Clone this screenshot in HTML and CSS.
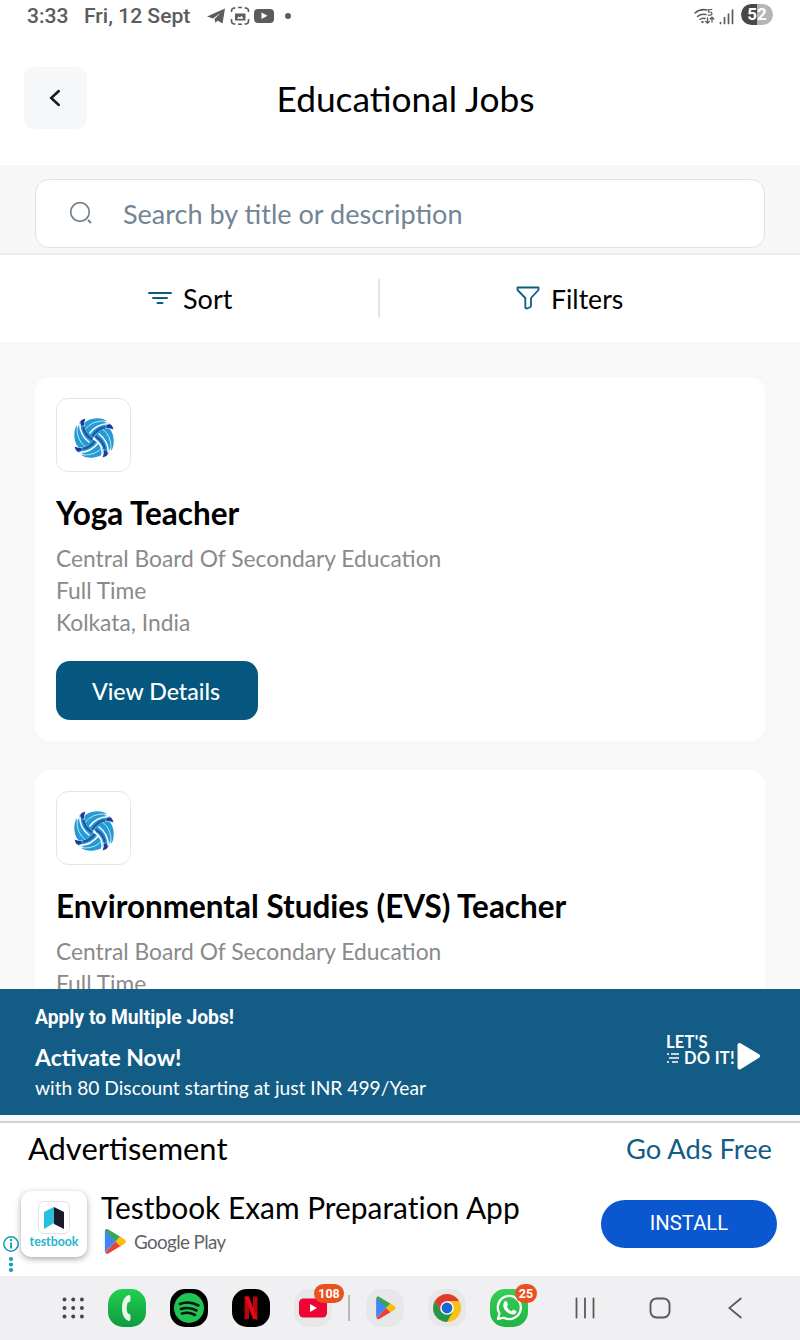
FILE: index.html
```html
<!DOCTYPE html>
<html lang="en">
<head>
<meta charset="utf-8">
<title>Educational Jobs</title>
<link rel="stylesheet" href="styles.css">
</head>
<body>
<svg class="defs" width="0" height="0" aria-hidden="true">
  <defs>
    <g id="blade">
      <path d="M-19 9Q-7 12.500 1 0Q9.500 4 9.500 15Q7 18.500 0 19.500Q-7 20.500-12.500 17.500L-10 16Q-14 15-16.500 14Z" fill="#259bd3"/>
      <path d="M-19.500 8.500Q-16 10.500-12.500 10.200L-13 13.500Q-16 13.800-18 12.500Z" fill="#2b3390"/>
      <path d="M-11 10.600Q-3 9.500 1.500 1.500" fill="none" stroke="#2456a6" stroke-width="2.400"/>
      <path d="M-14.500 14.200Q-3 14.500 4.500 4.500" fill="none" stroke="#fff" stroke-width="1.500"/>
      <path d="M-11 17Q2 17.500 8.500 9" fill="none" stroke="#fff" stroke-width=".7"/>
      <path d="M-19 7.500Q-7 10.500-.500-1" fill="none" stroke="#fff" stroke-width="1.500"/>
    </g>
    <g id="pinwheel">
      <use href="#blade"/><use href="#blade" transform="rotate(90)"/>
      <use href="#blade" transform="rotate(180)"/><use href="#blade" transform="rotate(270)"/>
    </g>
    <g id="play">
      <path d="M1 2.500Q1 0 3 0L13 11 1 22Z" fill="#4285f4"/>
      <path d="M1.200 1.500Q2-.600 4.500.500L17 7.500 12 12Z" fill="#34a853"/>
      <path d="M17 7.300L21.500 10Q24 12 21.500 14L17 16.700 12 12Z" fill="#fbbc04"/>
      <path d="M1.200 22.500Q2 24.600 4.500 23.500L17 16.500 12 12Z" fill="#ea4335"/>
      <path d="M1 2V22L12 12Z" fill="#4285f4"/>
    </g>
  </defs>
</svg>
<div class="screen">
  <div class="status">
    <span class="time">3:33</span>
    <span class="date">Fri, 12 Sept</span>
    <svg class="notif" width="90" height="20" viewBox="0 0 90 20">
      <g fill="#5c5c5e">
        <path d="M0 10.500L18 2.500 15.500 17.500 10.500 14.500 8.500 17 7.500 13 14 6.500 6 12.500Z"/>
        <path d="M28 7.500H38.500V14.500H28ZM30 12.800H36.500L34.500 9.800 33 11.500 31.500 10.500Z" fill-rule="evenodd"/>
        <path d="M51 3H63Q67 3 67 7V13Q67 17 63 17H51Q47 17 47 13V7Q47 3 51 3ZM54.500 6.500V13L60.500 9.800Z" fill-rule="evenodd"/>
        <circle cx="81" cy="10" r="3"/>
      </g>
      <path d="M24.500 6V5Q24.500 2 27.500 2H28.500M31 1.500H35M37.500 2H38.500Q41.500 2 41.500 5V6M41.500 13V15Q41.500 18 38.500 18H37.500M35 18.200H31M28.500 18H27.500Q24.500 18 24.500 15V13" fill="none" stroke="#5c5c5e" stroke-width="1.600"/>
    </svg>
    <svg class="signals" width="40" height="20" viewBox="0 0 40 20">
      <g fill="none" stroke="#5c5c5e" stroke-width="1.500" stroke-linecap="round">
        <path d="M1 7Q6 2.500 13 4M3.500 10.500Q7 7.500 12 8.500M6 13.500Q8.500 11.500 11 12.500"/>
        <path d="M13.500 12V17M11.700 15.500L13.500 17.200 15.300 15.500M18 16V11.500M16.200 13L18 11.200 19.800 13" stroke-width="1.300"/>
        <path d="M17.800 3.500H14.800L14.500 6H16Q18 6 18 7.600T15.800 9.200H14.300" stroke-width="1.200"/>
      </g>
      <circle cx="8.500" cy="16" r="1.200" fill="#5c5c5e"/>
      <path d="M26.500 17.500V16.500M30.500 17.500V11.500M34.500 17.500V8M38.500 17.500V4" stroke="#5c5c5e" stroke-width="1.700" stroke-linecap="round"/>
    </svg>
    <span class="battery">52</span>
  </div>

  <header class="header">
    <div class="back"><svg width="14" height="20" viewBox="0 0 14 20"><path d="M10.800 3L3.200 10 10.800 17" fill="none" stroke="#17191d" stroke-width="2.500" stroke-linecap="round"/></svg></div>
    <h1 class="title">Educational Jobs</h1>
  </header>

  <div class="search-strip">
    <div class="search">
      <svg width="24" height="24" viewBox="0 0 24 24"><g fill="none" stroke="#6f7f8d" stroke-width="1.700"><circle cx="11" cy="11" r="9.300"/><path d="M19 19L22 22" stroke-width="2"/></g></svg>
      <span class="placeholder">Search by title or description</span>
    </div>
  </div>

  <div class="tools">
    <div class="tool sort">
      <svg width="24" height="14" viewBox="0 0 24 14"><path d="M1 2H23M5 7H19M9.500 12H14.500" stroke="#0d5c82" stroke-width="2" stroke-linecap="round"/></svg>
      <span>Sort</span>
    </div>
    <div class="tool filters">
      <svg width="24" height="24" viewBox="0 0 24 24"><path d="M1.500 1.500H22.500V4L15 12V19.500Q15 21 13.500 21.500L11 22.500Q9.300 22.500 9.300 21V12L1.500 4Z" fill="none" stroke="#0d5c82" stroke-width="1.800" stroke-linejoin="round"/></svg>
      <span>Filters</span>
    </div>
  </div>

  <main class="list">
    <article class="card">
      <div class="logo"><svg width="42" height="42" viewBox="-21 -21 42 42"><use href="#pinwheel"/></svg></div>
      <h2 class="job">Yoga Teacher</h2>
      <p class="meta">Central Board Of Secondary Education</p>
      <p class="meta">Full Time</p>
      <p class="meta">Kolkata, India</p>
      <div class="details">View Details</div>
    </article>
    <article class="card">
      <div class="logo"><svg width="42" height="42" viewBox="-21 -21 42 42"><use href="#pinwheel"/></svg></div>
      <h2 class="job">Environmental Studies (EVS) Teacher</h2>
      <p class="meta">Central Board Of Secondary Education</p>
      <p class="meta">Full Time</p>
    </article>
  </main>

  <section class="banner">
    <div class="offer">
      <p class="apply">Apply to Multiple Jobs!</p>
      <p class="activate">Activate Now!</p>
      <p class="discount">with 80 Discount starting at just INR 499/Year</p>
    </div>
    <div class="cta">
      <div class="lets">
        <span>LET'S</span>
        <span class="do"><svg width="14" height="12" viewBox="0 0 14 12"><path d="M1 2H3M5 2H13M3 6H13M1 10H3M6 10H12" stroke="#fff" stroke-width="1.600"/></svg>DO IT!</span>
      </div>
      <svg width="24" height="28" viewBox="0 0 24 28"><path d="M2.500 3L21 14 2.500 25.500Z" fill="#fff" stroke="#fff" stroke-width="4" stroke-linejoin="round"/></svg>
    </div>
  </section>

  <section class="ad">
    <div class="ad-head"><span class="ad-label">Advertisement</span><span class="ad-free">Go Ads Free</span></div>
    <div class="ad-body">
      <svg class="info" width="18" height="38" viewBox="0 0 18 38"><g fill="#159fb4"><circle cx="9" cy="9" r="7.200" fill="none" stroke="#159fb4" stroke-width="1.500"/><rect x="8.100" y="7.500" width="1.900" height="6"/><circle cx="9" cy="5" r="1.200"/><circle cx="9" cy="24" r="2.100"/><circle cx="9" cy="29.500" r="2.100"/><circle cx="9" cy="35" r="2.100"/></g></svg>
      <div class="app">
        <div class="book"><svg width="22" height="24" viewBox="0 0 22 24"><path d="M1 6L11 1V17L1 23Z" fill="#28bfdc"/><path d="M11 1L21 6V23L11 18Z" fill="#1b1a2c"/></svg></div>
        <span class="app-name">testbook</span>
      </div>
      <div class="ad-text">
        <span class="ad-title">Testbook Exam Preparation App</span>
        <span class="store"><svg width="23" height="25" viewBox="0 0 24 24" preserveAspectRatio="none"><use href="#play"/></svg>Google Play</span>
      </div>
      <div class="install">INSTALL</div>
    </div>
  </section>

  <nav class="dock">
    <div class="slot"><svg width="22" height="22" viewBox="0 0 22 22"><path d="M2.500 2.500H20M2.500 11H20M2.500 19.500H20" stroke="#48484a" stroke-width="4" stroke-linecap="round" stroke-dasharray="0 8.700"/></svg></div>
    <div class="slot"><div class="tile phone"><svg width="38" height="38" viewBox="0 0 38 38"><path d="M20 6.200Q22 5.500 22.500 7.500V11.500Q22 13.500 19.800 13.500Q17.500 19 19.800 24.500Q22 24.500 22.500 26.500V30.500Q22 32.500 20 31.800Q14 29 14 19T20 6.200Z" fill="#e9f8eb"/></svg></div></div>
    <div class="slot"><div class="tile black"><svg width="38" height="38" viewBox="0 0 38 38"><circle cx="19" cy="19" r="15" fill="#1fc454"/><path d="M10 15Q19 11.500 28.500 16.500M11 20Q19 17.500 26.500 21.500M12 24.500Q18.500 22.500 25 26" fill="none" stroke="#06150b" stroke-width="2.600" stroke-linecap="round"/></svg></div></div>
    <div class="slot"><div class="tile black"><svg width="38" height="38" viewBox="0 0 38 38"><path d="M12.500 7.500H17V30L12.500 30.500ZM21 7.500H25.500V30.500L21 30Z" fill="#b20710"/><path d="M12.500 7.500H17L25.500 30.500 21 30Z" fill="#e50914"/></svg></div></div>
    <div class="slot"><div class="tile pale"><svg width="38" height="38" viewBox="0 0 38 38"><rect x="5" y="9.500" width="28" height="19" rx="4.500" fill="#ef0534"/><path d="M16 15V23L23 19Z" fill="#fff"/></svg><span class="badge wide">108</span></div></div>
    <div class="slot"><div class="tile pale"><svg width="38" height="38" viewBox="0 0 38 38"><g transform="translate(9.500 7.500) scale(.88 .95)"><use href="#play"/></g></svg></div></div>
    <div class="slot"><div class="tile pale"><svg width="38" height="38" viewBox="0 0 38 38"><circle cx="19" cy="19" r="14" fill="#fbc116"/><path d="M6.900 12A14 14 0 0 1 31.100 12H19L13 22.500Z" fill="#dc3b2e"/><path d="M6.900 12A14 14 0 0 0 19 33L25 22.500 13 22.500Z" fill="#23964c"/><circle cx="19" cy="19" r="6.800" fill="#fff"/><circle cx="19" cy="19" r="5.400" fill="#1967d2"/></svg></div></div>
    <div class="slot"><div class="tile whatsapp"><svg width="38" height="38" viewBox="0 0 38 38"><path d="M8 30L9.500 24.500A11.500 11.500 0 1 1 14 28.700Z" fill="none" stroke="#fff" stroke-width="2.300" stroke-linejoin="round"/><path d="M14.500 12.500Q16 11.500 17 13L18 15.500Q18 16.500 16.800 17.500Q18.500 21 21.700 22.300L23.500 20.500 26.500 22.300Q26.500 25.500 23 25.500Q18 25.500 14.500 20.500Q12 16 14.500 12.500Z" fill="#fff"/></svg><span class="badge">25</span></div></div>
    <div class="slot"><svg width="20" height="22" viewBox="0 0 20 22"><path d="M1.500 1.500V20.500M10 1.500V20.500M18.500 1.500V20.500" stroke="#59595b" stroke-width="1.800" stroke-linecap="round"/></svg></div>
    <div class="slot"><svg width="22" height="22" viewBox="0 0 22 22"><rect x="1.500" y="1.500" width="19" height="19" rx="6" fill="none" stroke="#59595b" stroke-width="1.900"/></svg></div>
    <div class="slot"><svg width="14" height="22" viewBox="0 0 14 22"><path d="M12.800 1.500L1.300 11 12.800 20.500" fill="none" stroke="#59595b" stroke-width="1.800" stroke-linecap="round"/></svg></div>
    <span class="divider"></span>
  </nav>
</div>
</body>
</html>
```
FILE: styles.css
```css
* { box-sizing: border-box; margin: 0; padding: 0; }
body { font-family: Lato, sans-serif; color: #000; background: #fff; }
svg { display: block; flex: none; }
.defs { position: absolute; }
.screen { width: 800px; height: 1340px; display: flex; flex-direction: column; overflow: hidden; white-space: nowrap; }
.screen > * { flex: none; }

.status { height: 32px; display: flex; align-items: center; padding: 0 27px; font: 500 21.1px/32px Roboto, sans-serif; color: #5c5c5e; }
.time { width: 57px; }
.date { width: 123px; }
.signals { margin: 0 1px 0 auto; }
.battery { width: 32px; height: 21px; margin: -3px 0 0 6px; border-radius: 11px; background: linear-gradient(90deg, #48484a 50%, #b5b5b5 50%); color: #fff; font: 700 17px/21px Roboto, sans-serif; text-align: center; }

.header { height: 133px; padding-top: 35px; display: grid; grid-template-columns: 63px 1fr 63px; padding-left: 24px; padding-right: 13px; }
.back { height: 62px; border-radius: 10px; background: #f6f7f9; display: flex; align-items: center; justify-content: center; padding-right: 1px; }
.title { font-size: 35.3px; line-height: 63px; font-weight: 400; text-align: center; }

.search-strip { height: 90px; padding: 14px 35px 0; background: #f7f7f7; border-bottom: 2px solid #ececec; }
.search { height: 69px; border: 1.5px solid #e2e2e2; border-radius: 14px; background: #fff; display: flex; align-items: center; padding-left: 33px; gap: 30px; }
.search svg { margin-top: -2px; }
.placeholder { font-size: 27.05px; color: #738496; }

.tools { height: 87px; display: grid; grid-template-columns: 379.5px 1fr; align-items: center; }
.tool { height: 38px; margin-top: -1px; display: flex; align-items: center; gap: 11px; font-size: 27px; line-height: 38px; }
.tool span { padding-top: 1px; }
.sort { padding-left: 148px; border-right: 2px solid #e3e3e3; }
.filters { padding-left: 136.5px; font-size: 26.6px; }

.list { height: 647px; padding: 35px 35px 0; display: flex; flex-direction: column; gap: 29px; background: #f8f8f8; overflow: hidden; }
.card { height: 364px; flex: none; border-radius: 15px; background: #fff; padding: 21px; }
.logo { width: 75px; height: 74px; border: 1.5px solid #e5e5e5; border-radius: 12px; display: flex; align-items: center; justify-content: center; padding-top: 5px; }
.job { font-size: 31.45px; line-height: 40px; font-weight: 700; margin: 21px 0 9px; }
.meta { font-size: 22.8px; line-height: 32px; color: #8a8a8a; }
.details { width: 202px; height: 59px; margin-top: 23px; padding-right: 2px; border-radius: 14px; background: #05577f; color: #fff; font-size: 23.2px; font-weight: 500; line-height: 61px; text-align: center; }

.banner { height: 126px; padding: 15px 39px 0 35px; background: #125c85; color: #fff; display: flex; justify-content: space-between; }
.apply { font: 700 19.3px/28px Roboto, sans-serif; }
.activate { font-size: 23px; line-height: 30px; font-weight: 700; margin-top: 10px; }
.discount { font-size: 19.2px; line-height: 30px; margin-top: 1px; }
.cta { display: flex; align-items: center; height: 72px; margin-top: 16px; gap: 2px; }
.lets { font: 700 16.5px/16px Lato, sans-serif; display: flex; flex-direction: column; margin-top: -13px; letter-spacing: .3px; }
.do { display: flex; align-items: center; gap: 4px; }

.ad { height: 161px; border-top: 6px solid #f8f8f8; background: #fff; }
.ad-head { border-top: 2px solid #d2d2d2; height: 61px; padding: 0 28px; display: flex; justify-content: space-between; }
.ad-label { font-size: 30.9px; line-height: 51px; }
.ad-free { font-size: 27.3px; line-height: 52px; color: #125c85; }
.ad-body { height: 90px; display: flex; padding: 0 23px 0 2px; align-items: flex-start; }
.info { margin-top: 53px; }
.app { width: 66px; height: 66px; margin: 9px 0 0 1px; border-radius: 10px; background: #fff; box-shadow: 0 2px 6px rgba(0,0,0,.35); display: flex; flex-direction: column; align-items: center; padding-top: 10px; }
.book { width: 32px; height: 33px; border: 1px solid #e2e2e2; border-radius: 6px; display: flex; justify-content: center; align-items: center; }
.app-name { font: 700 12.3px/15px Lato, sans-serif; color: #26b5cb; }
.ad-text { margin-left: 14px; display: flex; flex-direction: column; }
.ad-title { font-size: 29.9px; line-height: 50px; font-variant-ligatures: none; }
.store { display: flex; align-items: center; gap: 7px; margin: -3px 0 0 3px; font-size: 18.8px; line-height: 24px; letter-spacing: -.6px; color: #5f6368; height: 25px; }
.install { margin: 18px 0 0 auto; width: 176px; height: 48px; border-radius: 24px; background: #0b57d0; color: #fff; font: 400 20.3px/47px Roboto, sans-serif; text-align: center; }

.dock { height: 64px; background: #f0f0f2; display: grid; grid-template-columns: 62px 46px 78px 46px 78px 66px 58px 66px 86px 64px 86px; padding-left: 42px; position: relative; align-items: center; }
.slot { display: flex; justify-content: center; }
.tile { width: 38px; height: 38px; border-radius: 15px; position: relative; }
.phone { background: linear-gradient(#24ce50, #0c9b40); }
.black { background: #000; }
.pale { background: #e7e7e9; }
.whatsapp { background: linear-gradient(#35cf57, #20b443); }
.badge { position: absolute; left: 25px; top: -5px; width: 22px; height: 19px; border-radius: 10px; background: #e9511f; color: #fff; font: 700 12.500px/19px Roboto, sans-serif; text-align: center; }
.badge.wide { left: 20px; width: 30px; }
.divider { position: absolute; left: 348px; top: 19px; width: 2px; height: 26px; background: #b9b9bb; }
```
